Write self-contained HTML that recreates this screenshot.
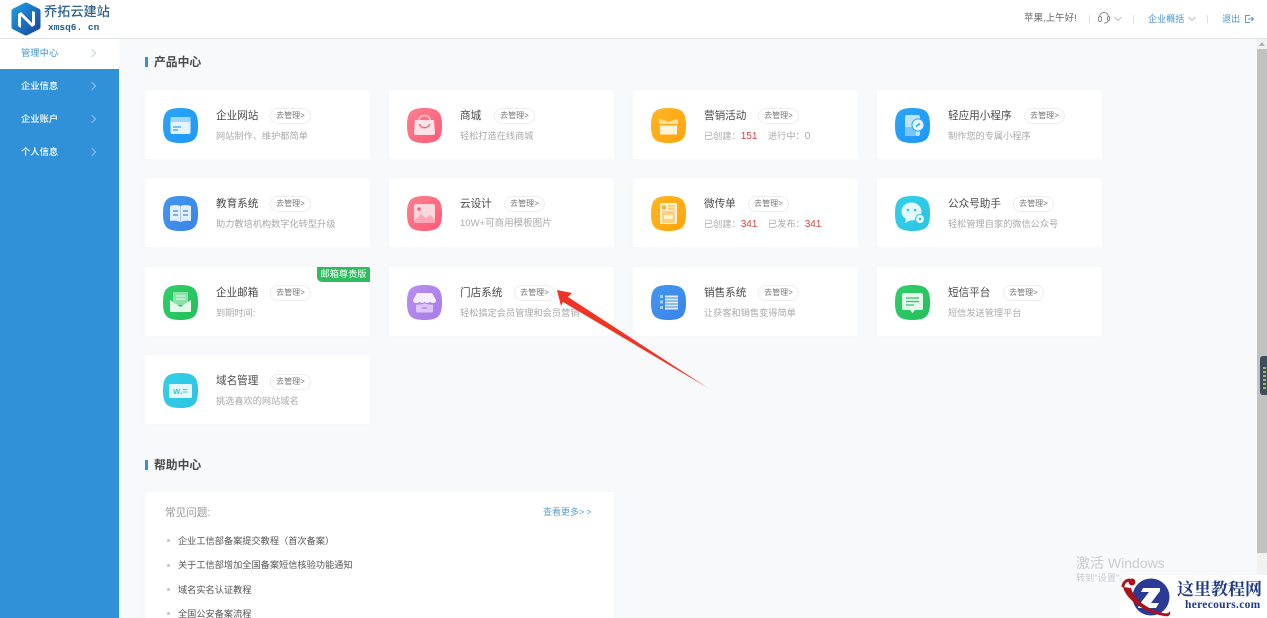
<!DOCTYPE html>
<html lang="zh"><head><meta charset="utf-8"><title>管理中心</title>
<style>
*{box-sizing:border-box;margin:0;padding:0}
html,body{width:1267px;height:618px;overflow:hidden;background:#f7f9fb}
#w{position:absolute;left:0;top:0;width:1267px;height:618px;overflow:hidden;filter:blur(.35px);font-family:"Liberation Sans","Noto Sans CJK SC",sans-serif;color:#555}
.a{position:absolute;white-space:nowrap}
#hd{position:absolute;left:0;top:0;width:1267px;height:39px;background:#fff;border-bottom:1px solid #dfe1e4}
#sd{position:absolute;left:0;top:39px;width:119px;height:579px;background:#3091d9}
.m{position:absolute;left:21px;font-size:9.3px;line-height:14px;color:#fff;font-weight:500}
.ch{position:absolute;left:89px;width:6px;height:6px;border-top:1px solid #8fc4ea;border-right:1px solid #8fc4ea;transform:rotate(45deg)}
.s{position:absolute;left:154px;font-size:11.8px;line-height:16px;font-weight:700;color:#4a4a4a}
.b{position:absolute;left:145px;width:3px;height:10px;background:#3a8fce}
.c{position:absolute;width:225px;height:69px;background:#fff;border-radius:2px;box-shadow:0 0 4px rgba(120,130,150,.04)}
.c svg.i{position:absolute;left:18px;top:18px;width:35px;height:35px}
.t{position:absolute;left:71px;top:19px;font-size:10.6px;line-height:15px;color:#4a4a4a;white-space:nowrap}
.d{position:absolute;left:71px;top:39px;font-size:9.2px;line-height:14px;color:#a9a9a9;white-space:nowrap}
.d b{font-weight:400;font-size:10px;color:#d8413f}
.p{position:absolute;top:18px;width:41px;height:16px;border:1px solid #ededed;border-radius:8px;font-size:8px;line-height:14px;text-align:center;color:#777;background:#fff;white-space:nowrap}
.q{position:absolute;left:178px;font-size:9.2px;line-height:14px;color:#555;white-space:nowrap}
.o{position:absolute;left:167px;width:3px;height:3px;border-radius:50%;background:#c4c4c4}
</style></head><body><div id="w">
<svg width="0" height="0" style="position:absolute"><defs>
<linearGradient id="gb" x1="0" y1="0" x2="1" y2="1"><stop offset="0" stop-color="#2ba5f7"/><stop offset="1" stop-color="#1e98f5"/></linearGradient>
<linearGradient id="gr" x1="0" y1="0" x2="1" y2="1"><stop offset="0" stop-color="#ff7e8f"/><stop offset="1" stop-color="#fb5b77"/></linearGradient>
<linearGradient id="go" x1="0" y1="0" x2="1" y2="1"><stop offset="0" stop-color="#ffb622"/><stop offset="1" stop-color="#fda30f"/></linearGradient>
<linearGradient id="gd" x1="0" y1="0" x2="1" y2="1"><stop offset="0" stop-color="#4197ef"/><stop offset="1" stop-color="#3b84e8"/></linearGradient>
<linearGradient id="gc" x1="0" y1="0" x2="1" y2="1"><stop offset="0" stop-color="#33d0e8"/><stop offset="1" stop-color="#2dc3e6"/></linearGradient>
<linearGradient id="gg" x1="0" y1="0" x2="1" y2="1"><stop offset="0" stop-color="#2fcf68"/><stop offset="1" stop-color="#23bf5c"/></linearGradient>
<linearGradient id="gp" x1="0" y1="0" x2="1" y2="1"><stop offset="0" stop-color="#bb8df0"/><stop offset="1" stop-color="#a87de8"/></linearGradient>
<linearGradient id="ln" x1="0" y1="0" x2="1" y2="1"><stop offset="0" stop-color="#1f9be0"/><stop offset=".55" stop-color="#1a6fc0"/><stop offset="1" stop-color="#1b4a98"/></linearGradient>
<path id="sq" d="M17.5 0C31 0 35 4 35 17.500 35 31 31 35 17.500 35 4 35 0 31 0 17.500 0 4 4 0 17.500 0Z"/>
</defs></svg>

<div id="hd">
<svg class="a" style="left:10px;top:2px" width="32" height="34" viewBox="0 0 32 34"><path d="M16 3 28 9v16L16 31 4 25V9Z" fill="url(#ln)" stroke="url(#ln)" stroke-width="5" stroke-linejoin="round"/><path d="M8 24V12l3-2 11 11V9l3 1v13l-3 2-11-11v12Z" fill="#fff"/></svg>
<div class="a" style="left:44px;top:3px;font-size:13.2px;line-height:18px;color:#2e6289;font-weight:500">乔拓云建站</div>
<div class="a" style="left:48px;top:21px;font-family:'Liberation Mono',monospace;font-size:9.5px;line-height:14px;font-weight:700;color:#235f8e">xmsq6. cn</div>

<div class="a" style="left:1024px;top:12px;font-size:9.500px;line-height:14px;color:#666">苹果,上午好!</div>
<div class="a" style="left:1089px;top:15px;width:1px;height:8px;background:#ddd"></div>
<svg class="a" style="left:1097px;top:11px" width="15" height="14" viewBox="0 0 15 14" fill="none" stroke="#888"><path d="M2.500 9V6a4.500 4.500 0 0 1 9 0"/><rect x="1.500" y="5.500" width="3" height="5" rx="1.500" fill="#fff"/><rect x="10.500" y="5.500" width="2" height="4" rx="1"/><path d="M11 10c0 1.500-2 2-4 2"/></svg>
<svg class="a" style="left:1114px;top:16px" width="8" height="6" viewBox="0 0 8 6" fill="none" stroke="#bbb"><path d="M.5 1 4 4.500 7.500 1"/></svg>
<div class="a" style="left:1133px;top:15px;width:1px;height:8px;background:#ddd"></div>
<div class="a" style="left:1148px;top:12px;font-size:9.1px;line-height:14px;color:#4b93cc">企业概括</div>
<svg class="a" style="left:1188px;top:16px" width="8" height="6" viewBox="0 0 8 6" fill="none" stroke="#bbb"><path d="M.5 1 4 4.500 7.500 1"/></svg>
<div class="a" style="left:1207px;top:15px;width:1px;height:8px;background:#ddd"></div>
<div class="a" style="left:1222px;top:12px;font-size:9.1px;line-height:14px;color:#4b93cc">退出</div>
<svg class="a" style="left:1245px;top:15px" width="9" height="8" viewBox="0 0 9 8" fill="none" stroke="#5b9bcf"><path d="M5 .5H.5v7H5M3 4h5.500M6.500 2 8.500 4l-2 2"/></svg>
</div>

<div id="sd"></div>
<div class="a" style="left:0;top:39px;width:119px;height:30px;background:#fff"></div>
<div class="m" style="top:46px;color:#5fa5d6">管理中心</div><div class="ch" style="top:50px;border-color:#c5d3de"></div>
<div class="m" style="top:79px">企业信息</div><div class="ch" style="top:83px"></div>
<div class="m" style="top:112px">企业账户</div><div class="ch" style="top:116px"></div>
<div class="m" style="top:145px">个人信息</div><div class="ch" style="top:149px"></div>

<div class="b" style="top:57px"></div><div class="s" style="top:54px">产品中心</div>

<div class="c" style="left:145px;top:90px">
<svg class="i" viewBox="0 0 35 35"><use href="#sq" fill="url(#gb)"/><rect x="7.500" y="9" width="20" height="17" rx="2" fill="#e4f3fe"/><rect x="7.500" y="9" width="20" height="5" rx="2" fill="#9fd6fb"/><path d="M10 19h8M10 22h5" stroke="#35a5f2" stroke-width="1.200"/></svg>
<div class="t">企业网站</div><div class="p" style="left:125px">去管理&gt;</div><div class="d">网站制作、维护都简单</div></div>

<div class="c" style="left:389px;top:90px">
<svg class="i" viewBox="0 0 35 35"><use href="#sq" fill="url(#gr)"/><path d="M8 12h19l1 13q0 2-2 2H9q-2 0-2-2Z" fill="#fde3e8"/><path d="M12 12c0-6 11-6 11 0" fill="none" stroke="#fcc3ce" stroke-width="1.500"/><path d="M12.500 16c1 5 9 5 10 0" fill="none" stroke="#f9617c" stroke-width="1.500"/></svg>
<div class="t">商城</div><div class="p" style="left:105px">去管理&gt;</div><div class="d">轻松打造在线商城</div></div>

<div class="c" style="left:633px;top:90px">
<svg class="i" viewBox="0 0 35 35"><use href="#sq" fill="url(#go)"/><path d="M8 11l5 1 4.500 2 4.500-2 5-1v5H8Z" fill="#ffdd9a"/><rect x="9" y="17.500" width="17" height="9" fill="#fff3d9"/></svg>
<div class="t">营销活动</div><div class="p" style="left:125px">去管理&gt;</div><div class="d">已创建：<b>151</b><span style="position:absolute;left:64px">进行中：<span style="font-size:10px">0</span></span></div></div>

<div class="c" style="left:877px;top:90px">
<svg class="i" viewBox="0 0 35 35"><use href="#sq" fill="url(#gb)"/><rect x="10" y="7" width="15" height="21" rx="2" fill="#bfe2fb"/><rect x="10" y="19" width="11" height="9" fill="#7cc5f8"/><circle cx="23" cy="17" r="6" fill="#e8f5fe" stroke="#2ba5f7"/><path d="M21 18.500l4-3" stroke="#2ba5f7" stroke-width="1.500"/></svg>
<div class="t">轻应用小程序</div><div class="p" style="left:147px">去管理&gt;</div><div class="d">制作您的专属小程序</div></div>

<div class="c" style="left:145px;top:178px">
<svg class="i" viewBox="0 0 35 35"><use href="#sq" fill="url(#gd)"/><path d="M7 10q6-2 10.500 0 4.500-2 10.500 0v15q-6-1-10.500 1-4.500-2-10.500-1Z" fill="#e3effc"/><path d="M17.500 10v16" stroke="#a9caf1"/><path d="M10 15h5M10 19h5M20 15h5M20 19h5" stroke="#3f8dec" stroke-width="1.300"/></svg>
<div class="t">教育系统</div><div class="p" style="left:125px">去管理&gt;</div><div class="d">助力教培机构数字化转型升级</div></div>

<div class="c" style="left:389px;top:178px">
<svg class="i" viewBox="0 0 35 35"><use href="#sq" fill="url(#gr)"/><rect x="7" y="8" width="21" height="19" rx="2" fill="#fdd7de"/><circle cx="12" cy="13" r="1.800" fill="#f9617c"/><path d="M7 25l7-7 5 4 4-3 5 4v2q0 2-2 2H9q-2 0-2-2Z" fill="#fba9b8"/></svg>
<div class="t">云设计</div><div class="p" style="left:115px">去管理&gt;</div><div class="d" style="font-size:9.500px">10W+可商用模板图片</div></div>

<div class="c" style="left:633px;top:178px">
<svg class="i" viewBox="0 0 35 35"><use href="#sq" fill="url(#go)"/><rect x="9" y="7" width="17" height="21" rx="1.500" fill="#fff0cf"/><rect x="11" y="9.500" width="4" height="4" fill="#fdb12b"/><path d="M17 10h7M17 13h7M11 16h13" stroke="#fdb12b"/><rect x="12" y="18" width="11" height="6" fill="none" stroke="#fdb12b"/><path d="M11 26h13" stroke="#fdb12b"/></svg>
<div class="t">微传单</div><div class="p" style="left:115px">去管理&gt;</div><div class="d">已创建：<b>341</b><span style="position:absolute;left:64px">已发布：<b>341</b></span></div></div>

<div class="c" style="left:877px;top:178px">
<svg class="i" viewBox="0 0 35 35"><use href="#sq" fill="url(#gc)"/><ellipse cx="16.500" cy="15.500" rx="10" ry="9" fill="#e4f8fc"/><path d="M11 22l-1 5 6-3Z" fill="#e4f8fc"/><circle cx="13" cy="14" r="1.300" fill="#2ec7e6"/><circle cx="20" cy="14" r="1.300" fill="#2ec7e6"/><circle cx="25" cy="23" r="4.500" fill="#e4f8fc" stroke="#2ec7e6"/><circle cx="25" cy="23" r="1.300" fill="#2ec7e6"/></svg>
<div class="t">公众号助手</div><div class="p" style="left:136px">去管理&gt;</div><div class="d">轻松管理自家的微信公众号</div></div>

<div class="c" style="left:145px;top:267px">
<svg class="i" viewBox="0 0 35 35"><use href="#sq" fill="url(#gg)"/><rect x="10" y="7" width="15" height="13" rx="1" fill="#8be3aa"/><path d="M13 11h9M13 14h9" stroke="#e4f8ec"/><path d="M7 15l10.500 7L28 15v11q0 1-1 1H8q-1 0-1-1Z" fill="#e4f8ec"/></svg>
<div class="t">企业邮箱</div><div class="p" style="left:125px">去管理&gt;</div><div class="d">到期时间:</div>
<div class="a" style="right:0;top:0;width:53px;height:15px;background:#2fbc5f;border-radius:0 2px 0 5px;color:#fff;font-size:9.200px;line-height:15px;text-align:center">邮箱尊贵版</div></div>

<div class="c" style="left:389px;top:267px">
<svg class="i" viewBox="0 0 35 35"><use href="#sq" fill="url(#gp)"/><path d="M10 8h15l4 7q0 3-3 3-2.500 0-3-1.500-1 1.500-3 1.500t-2.500-1.500Q17 18 15 18t-2.500-1.500Q12 18 9.500 18 6 18 6 15Z" fill="#f6eefd"/><path d="M9 19.500q4 .5 8.500-1 4.500 1.500 8.500 1V26q0 1.500-1.500 1.500h-14Q9 27.500 9 26Z" fill="#dcc6f6"/><path d="M15 23h5" stroke="#a87de8" stroke-width="1.200"/></svg>
<div class="t">门店系统</div><div class="p" style="left:125px">去管理&gt;</div><div class="d">轻松搞定会员管理和会员营销</div></div>

<div class="c" style="left:633px;top:267px">
<svg class="i" viewBox="0 0 35 35"><use href="#sq" fill="url(#gd)"/><path d="M9 10h3v3H9ZM9 15.500h3v3H9ZM9 21h3v3H9Z" fill="#a9cdf5"/><path d="M14 11.500h13M14 14.500h13M14 17.500h13M14 20.500h13M14 23.500h13" stroke="#e3effc" stroke-width="2"/></svg>
<div class="t">销售系统</div><div class="p" style="left:125px">去管理&gt;</div><div class="d">让获客和销售变得简单</div></div>

<div class="c" style="left:877px;top:267px">
<svg class="i" viewBox="0 0 35 35"><use href="#sq" fill="url(#gg)"/><path d="M9 8h17q2 0 2 2v13q0 2-2 2h-6l-2.500 3-2.500-3H9q-2 0-2-2V10q0-2 2-2Z" fill="#e4f8ec"/><path d="M11 13h13M11 16.500h13M11 20h8" stroke="#2fc766" stroke-width="1.300"/></svg>
<div class="t">短信平台</div><div class="p" style="left:126px">去管理&gt;</div><div class="d">短信发送管理平台</div></div>

<div class="c" style="left:145px;top:355px">
<svg class="i" viewBox="0 0 35 35"><use href="#sq" fill="url(#gc)"/><rect x="6" y="11" width="23" height="14" rx="1.500" fill="#e4f8fc"/><text x="17.500" y="21" text-anchor="middle" font-family="Liberation Sans,sans-serif" font-weight="700" font-size="9" fill="#2ec7e6">w.=</text></svg>
<div class="t" style="top:19px">域名管理</div><div class="p" style="left:125px;top:19px">去管理&gt;</div><div class="d">挑选喜欢的网站域名</div></div>

<div class="b" style="top:460px"></div><div class="s" style="top:457px">帮助中心</div>
<div class="c" style="left:145px;top:492px;width:469px;height:140px"></div>
<div class="a" style="left:165px;top:505px;font-size:10.600px;line-height:16px;color:#9a9a9a">常见问题:</div>
<div class="a" style="left:543px;top:505px;font-size:9px;line-height:14px;color:#5a9fd4">查看更多<span style="letter-spacing:2px">&gt;&gt;</span></div>
<div class="o" style="top:539px"></div><div class="q" style="top:534px">企业工信部备案提交教程（首次备案）</div>
<div class="o" style="top:564px"></div><div class="q" style="top:558px">关于工信部增加全国备案短信核验功能通知</div>
<div class="o" style="top:588px"></div><div class="q" style="top:583px">域名实名认证教程</div>
<div class="o" style="top:612px"></div><div class="q" style="top:607px">全国公安备案流程</div>

<svg class="a" style="left:0;top:0" width="1267" height="618"><path d="M557 290 572 293 568 297 708 388 563 302 561 306Z" fill="#ee3424"/></svg>

<div class="a" style="left:1257px;top:39px;width:10px;height:579px;background:#f1f1f1"></div>
<div class="a" style="left:1257px;top:49px;width:10px;height:504px;background:#c1c1c1"></div>
<svg class="a" style="left:1258px;top:41px" width="8" height="6"><path d="M4 1 7 5H1Z" fill="#b0b0b0"/></svg>
<div class="a" style="left:1260px;top:356px;width:7px;height:39px;background:#3f4c5c;border-radius:3px 0 0 3px"></div>
<div class="a" style="left:1263px;top:367px;width:3px;height:22px;background:repeating-linear-gradient(#a9b36a 0 2px,#3f4c5c 2px 4px)"></div>

<div class="a" style="left:1076px;top:554px;font-size:14px;line-height:18px;color:#c9cbce">激活 Windows</div>
<div class="a" style="left:1076px;top:572px;font-size:9.200px;line-height:13px;color:#c9cbce">转到"设置"</div>

<div class="a" style="left:1120px;top:575px;width:147px;height:43px;background:#fff"></div>
<svg class="a" style="left:1120px;top:575px" width="60" height="43" viewBox="0 0 60 43"><circle cx="31" cy="22" r="18.500" fill="#2b3a94"/><path d="M23 13h17v3L31 28h8l-3 5H18l1-3 10-13h-8Z" fill="#fff"/><path d="M3 12c3 12 20 25 41 29 5 1 7-1 6-5-1 2-3 3-7 2C26 34 14 24 11 13Z" fill="#a81419"/><circle cx="12" cy="7" r="3.500" fill="#a81419"/><path d="M10 5C6 5 3 8 3 12" stroke="#a81419" stroke-width="3" fill="none"/></svg>
<div class="a" style="left:1177px;top:578px;font-family:'Noto Serif CJK SC',serif;font-size:17px;line-height:20px;font-weight:700;color:#1f3a86">这里教程网</div>
<div class="a" style="left:1185px;top:598px;font-family:'Liberation Serif',serif;font-size:11.500px;line-height:14px;font-weight:700;color:#1f3a86;letter-spacing:.3px">herecours.com</div>
</div></body></html>
